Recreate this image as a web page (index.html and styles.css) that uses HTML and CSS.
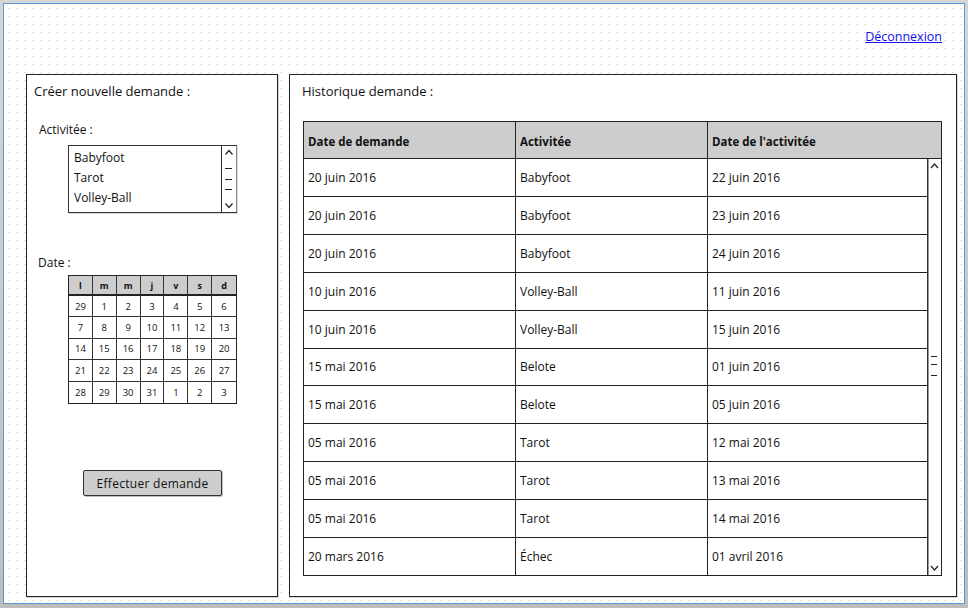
FILE: index.html
```html
<!DOCTYPE html>
<html lang="fr">
<head>
<meta charset="utf-8">
<title>Demandes</title>
<link rel="stylesheet" href="styles.css">
</head>
<body>
<div class="window">
  <div class="screen">
    <div class="topbar"><a class="logout" href="#">Déconnexion</a></div>
    <div class="main">
      <section class="panel panel-left">
        <div class="title">Créer nouvelle demande :</div>
        <div class="label label-act">Activitée :</div>
        <div class="listbox">
          <ul class="items">
            <li>Babyfoot</li>
            <li>Tarot</li>
            <li>Volley-Ball</li>
          </ul>
          <div class="vscroll">
            <svg width="14" height="66" viewBox="0 0 14 66">
              <path d="M3.5 8.5 L7 4.5 L10.5 8.5" fill="none" stroke="#222" stroke-width="1.2"/>
              <path d="M3 22.5 H10 M3 33.5 H10 M3 43.5 H10" stroke="#222" stroke-width="1.1"/>
              <path d="M3.5 57.5 L7 61.5 L10.5 57.5" fill="none" stroke="#222" stroke-width="1.2"/>
            </svg>
          </div>
        </div>
        <div class="label label-date">Date :</div>
        <div class="calendar">
          <div class="ch">l</div><div class="ch">m</div><div class="ch">m</div><div class="ch">j</div><div class="ch">v</div><div class="ch">s</div><div class="ch">d</div>
          <div>29</div><div>1</div><div>2</div><div>3</div><div>4</div><div>5</div><div>6</div>
          <div>7</div><div>8</div><div>9</div><div>10</div><div>11</div><div>12</div><div>13</div>
          <div>14</div><div>15</div><div>16</div><div>17</div><div>18</div><div>19</div><div>20</div>
          <div>21</div><div>22</div><div>23</div><div>24</div><div>25</div><div>26</div><div>27</div>
          <div>28</div><div>29</div><div>30</div><div>31</div><div>1</div><div>2</div><div>3</div>
        </div>
        <button class="btn" type="button">Effectuer demande</button>
      </section>
      <section class="panel panel-right">
        <div class="title">Historique demande :</div>
        <div class="table">
          <div class="thead">
            <div class="th">Date de demande</div>
            <div class="th">Activitée</div>
            <div class="th">Date de l'activitée</div>
          </div>
          <div class="tbody">
            <div class="rows">
              <div class="tr"><div class="td">20 juin 2016</div><div class="td">Babyfoot</div><div class="td">22 juin 2016</div></div>
              <div class="tr"><div class="td">20 juin 2016</div><div class="td">Babyfoot</div><div class="td">23 juin 2016</div></div>
              <div class="tr"><div class="td">20 juin 2016</div><div class="td">Babyfoot</div><div class="td">24 juin 2016</div></div>
              <div class="tr"><div class="td">10 juin 2016</div><div class="td">Volley-Ball</div><div class="td">11 juin 2016</div></div>
              <div class="tr"><div class="td">10 juin 2016</div><div class="td">Volley-Ball</div><div class="td">15 juin 2016</div></div>
              <div class="tr"><div class="td">15 mai 2016</div><div class="td">Belote</div><div class="td">01 juin 2016</div></div>
              <div class="tr"><div class="td">15 mai 2016</div><div class="td">Belote</div><div class="td">05 juin 2016</div></div>
              <div class="tr"><div class="td">05 mai 2016</div><div class="td">Tarot</div><div class="td">12 mai 2016</div></div>
              <div class="tr"><div class="td">05 mai 2016</div><div class="td">Tarot</div><div class="td">13 mai 2016</div></div>
              <div class="tr"><div class="td">05 mai 2016</div><div class="td">Tarot</div><div class="td">14 mai 2016</div></div>
              <div class="tr"><div class="td">20 mars 2016</div><div class="td">Échec</div><div class="td">01 avril 2016</div></div>
            </div>
            <div class="tscroll">
              <svg width="13" height="416" viewBox="0 0 13 416">
                <path d="M3 9 L6.5 5 L10 9" fill="none" stroke="#222" stroke-width="1.2"/>
                <path d="M3 197.5 H9 M3 205.5 H9 M3 216.5 H9" stroke="#222" stroke-width="1.1"/>
                <path d="M3 407 L6.5 411 L10 407" fill="none" stroke="#222" stroke-width="1.2"/>
              </svg>
            </div>
          </div>
        </div>
      </section>
    </div>
  </div>
</div>
</body>
</html>
```

FILE: styles.css
```css
* { box-sizing: border-box; }
html, body { margin: 0; padding: 0; }
body {
  font-family: "Open Sans", "DejaVu Sans", sans-serif;
  color: #111;
  background: #c9c9c9;
}
.window {
  width: 968px;
  height: 608px;
  padding: 3px 3px 4px 3px;
  background: linear-gradient(#d6d6d6, #bdbdbd);
}
.screen {
  width: 962px;
  height: 601px;
  border: 1px solid #5b9bd8;
  background-color: #fff;
  background-image: radial-gradient(ellipse 0.8px 1.2px at 1px 1.5px, #e2e2e2 80%, transparent 100%);
  background-size: 8px 8px;
  background-position: 4px 3px;
  display: flex;
  flex-direction: column;
}
.topbar {
  height: 70px;
  display: flex;
  justify-content: flex-end;
  padding: 24px 22px 0 0;
}
.logout {
  font-size: 12.5px;
  line-height: 18px;
  color: #1010f0;
  text-decoration: underline;
  height: 18px;
}
.main {
  display: flex;
  gap: 11px;
  padding-left: 22px;
}
.panel {
  background: #fff;
  border: 1px solid #222;
  box-shadow: 1px 1px 0 rgba(0,0,0,0.15);
  height: 523px;
  display: flex;
  flex-direction: column;
  align-items: flex-start;
}
.panel-left { width: 252px; }
.panel-right { width: 668px; }
.title {
  font-size: 13px;
  line-height: 18px;
  margin-top: 7px;
  margin-left: 7px;
}
.panel-right .title { margin-left: 12px; }
.label {
  font-size: 12px;
  line-height: 18px;
  margin-left: 12px;
}
.label-act { margin-top: 21px; }
.label-date { margin-top: 41px; margin-left: 11px; }
.listbox {
  margin-top: 6px;
  margin-left: 41px;
  width: 169px;
  height: 68px;
  border: 1px solid #333;
  display: flex;
  box-shadow: 1px 1px 0 rgba(0,0,0,0.15);
}
.items {
  list-style: none;
  margin: 0;
  padding: 2px 0 0 5px;
  flex: 1;
  font-size: 12px;
  line-height: 20px;
}
.vscroll {
  width: 15px;
  border-left: 1px solid #333;
  box-shadow: 1px 0 0 #888;
}
.vscroll svg, .tscroll svg { display: block; }
.calendar {
  margin-top: 3px;
  margin-left: 41px;
  width: 169px;
  height: 129px;
  border: 1px solid #222;
  display: grid;
  grid-template-columns: repeat(7, 1fr);
  grid-template-rows: 20px repeat(5, 1fr);
  font-size: 9.5px;
}
.calendar > div {
  display: flex;
  align-items: center;
  justify-content: center;
  border-right: 1px solid #333;
  border-bottom: 1px solid #333;
}
.calendar > div:nth-child(7n) { border-right: none; }
.calendar > div:nth-last-child(-n+7) { border-bottom: none; }
.calendar > .ch {
  background: #cdcdcd;
  font-weight: 700;
  font-size: 9px;
  border-bottom: 2px solid #222;
}
.btn {
  margin-top: 66px;
  margin-left: 56px;
  width: 139px;
  height: 26px;
  background: #cdcdcd;
  border: 1px solid #333;
  border-radius: 2px;
  box-shadow: 1px 1px 0 rgba(0,0,0,0.25);
  font-family: "Open Sans", "DejaVu Sans", sans-serif;
  font-size: 12px;
  color: #111;
  letter-spacing: 0.3px;
  padding: 0;
}
.table {
  margin-top: 21px;
  margin-left: 13px;
  width: 639px;
  height: 455px;
  border: 1px solid #222;
  display: flex;
  flex-direction: column;
}
.thead {
  height: 37px;
  display: grid;
  grid-template-columns: 212px 192px 1fr;
  background: #cdcdcd;
  border-bottom: 1px solid #222;
}
.th {
  font-size: 11.5px;
  font-weight: 700;
  display: flex;
  align-items: center;
  padding-left: 4px;
  padding-top: 2px;
}
.th:not(:last-child) { border-right: 1px solid #222; }
.tbody {
  flex: 1;
  display: flex;
}
.rows {
  flex: 1;
  display: flex;
  flex-direction: column;
}
.tr {
  flex: 1;
  display: grid;
  grid-template-columns: 212px 192px 1fr;
  border-bottom: 1px solid #222;
}
.tr:last-child { border-bottom: none; }
.td {
  font-size: 12px;
  display: flex;
  align-items: center;
  padding-left: 4px;
}
.td:not(:last-child) { border-right: 1px solid #222; }
.tscroll {
  width: 14px;
  border-left: 1px solid #333;
  box-shadow: 1px 0 0 #999 inset;
}
```
